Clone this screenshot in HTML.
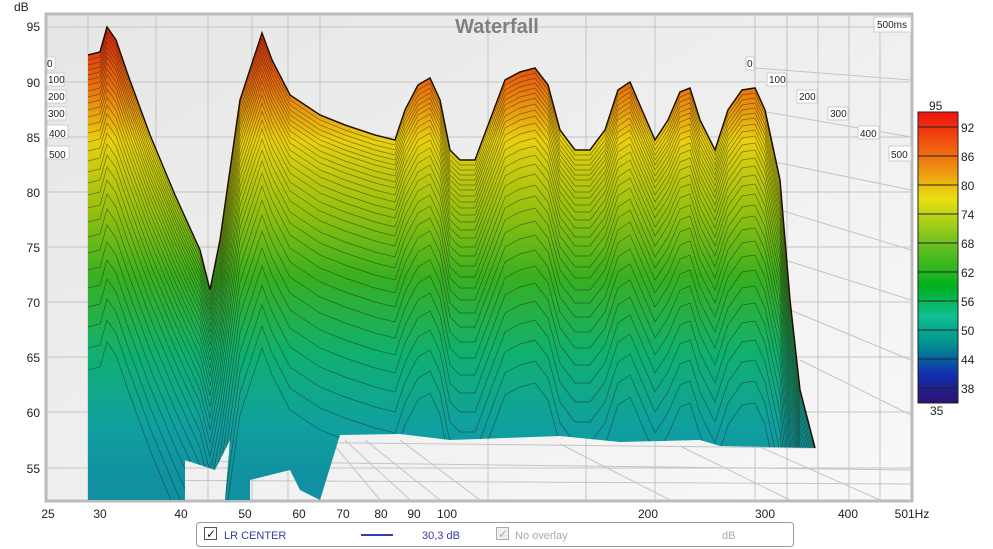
<!DOCTYPE html>
<html><head><meta charset="utf-8"><style>
html,body{margin:0;padding:0;background:#fff;width:993px;height:549px;overflow:hidden;font-family:"Liberation Sans",sans-serif}
svg{display:block}
</style></head><body>
<svg width="993" height="549" viewBox="0 0 993 549" xmlns="http://www.w3.org/2000/svg" font-family="Liberation Sans, sans-serif">
<defs>
<linearGradient id="bg" x1="0" y1="0" x2="1" y2="1"><stop offset="0" stop-color="#e6e6e6"/><stop offset="1" stop-color="#f8f8f8"/></linearGradient>
<linearGradient id="wf" x1="0" y1="28" x2="0" y2="480" gradientUnits="userSpaceOnUse">
<stop offset="0" stop-color="#d82010"/><stop offset="0.12" stop-color="#e86a10"/><stop offset="0.25" stop-color="#e8d010"/><stop offset="0.4" stop-color="#98c010"/><stop offset="0.55" stop-color="#38b020"/><stop offset="0.72" stop-color="#10b070"/><stop offset="0.88" stop-color="#10a0a0"/><stop offset="1" stop-color="#1090a0"/></linearGradient>
<linearGradient id="cb" x1="0" y1="0" x2="0" y2="1"><stop offset="0" stop-color="#f01010"/><stop offset="0.15" stop-color="#f07010"/><stop offset="0.3" stop-color="#e8e010"/><stop offset="0.45" stop-color="#70c020"/><stop offset="0.6" stop-color="#00b020"/><stop offset="0.7" stop-color="#10c090"/><stop offset="0.8" stop-color="#009090"/><stop offset="0.9" stop-color="#1030b0"/><stop offset="1" stop-color="#301070"/></linearGradient>
<path id="top" d="M88,55 L100,52 L107,27 L116,40 L128,75 L150,135 L175,195 L200,250 L210,290 L220,240 L240,100 L262,33 L272,60 L290,95 L320,115 L345,125 L375,135 L395,140 L405,110 L418,85 L430,78 L440,100 L450,150 L460,160 L475,160 L490,120 L505,80 L520,72 L535,68 L548,85 L560,130 L575,150 L590,150 L605,130 L618,90 L630,82 L642,110 L655,140 L668,120 L680,92 L690,88 L700,120 L715,150 L728,110 L742,90 L755,88 L765,110 L780,180 L790,300 L800,390 L815,448"/>
<clipPath id="cl"><path d="M88,500 L88,55 L100,52 L107,27 L116,40 L128,75 L150,135 L175,195 L200,250 L210,290 L220,240 L240,100 L262,33 L272,60 L290,95 L320,115 L345,125 L375,135 L395,140 L405,110 L418,85 L430,78 L440,100 L450,150 L460,160 L475,160 L490,120 L505,80 L520,72 L535,68 L548,85 L560,130 L575,150 L590,150 L605,130 L618,90 L630,82 L642,110 L655,140 L668,120 L680,92 L690,88 L700,120 L715,150 L728,110 L742,90 L755,88 L765,110 L780,180 L790,300 L800,390 L815,448 L720,446 L700,440 L620,442 L560,436 L450,440 L400,434 L340,435 L320,500 L300,490 L290,470 L250,480 L250,500 L225,500 L230,440 L215,470 L185,460 L185,500 Z"/></clipPath>
</defs>
<rect x="46" y="14" width="866" height="487" fill="url(#bg)" stroke="#bbb" stroke-width="3"/>
<g stroke="#c4c4c4" stroke-width="1">
<line x1="46" y1="27" x2="911" y2="27"/><line x1="46" y1="82" x2="911" y2="82"/><line x1="46" y1="137" x2="911" y2="137"/><line x1="46" y1="192" x2="911" y2="192"/><line x1="46" y1="247" x2="911" y2="247"/><line x1="46" y1="302" x2="911" y2="302"/><line x1="46" y1="357" x2="911" y2="357"/><line x1="46" y1="412" x2="911" y2="412"/><line x1="46" y1="468" x2="911" y2="468"/>
<line x1="88" y1="14" x2="88" y2="500"/><line x1="156" y1="14" x2="156" y2="500"/><line x1="208" y1="14" x2="208" y2="500"/><line x1="252" y1="14" x2="252" y2="500"/><line x1="288" y1="14" x2="288" y2="500"/><line x1="320" y1="14" x2="320" y2="500"/><line x1="488" y1="14" x2="488" y2="500"/><line x1="586" y1="14" x2="586" y2="500"/><line x1="655" y1="14" x2="655" y2="500"/><line x1="755" y1="14" x2="755" y2="500"/><line x1="787" y1="14" x2="787" y2="500"/><line x1="818" y1="14" x2="818" y2="500"/><line x1="849" y1="14" x2="849" y2="500"/><line x1="880" y1="14" x2="880" y2="500"/>
<line x1="88" y1="440" x2="815" y2="448"/><line x1="90" y1="460" x2="911" y2="470"/><line x1="90" y1="480" x2="911" y2="484"/>
<line x1="330" y1="440" x2="380" y2="500"/><line x1="345" y1="440" x2="410" y2="500"/><line x1="365" y1="440" x2="440" y2="500"/><line x1="400" y1="440" x2="480" y2="500"/><line x1="560" y1="444" x2="670" y2="500"/><line x1="680" y1="446" x2="790" y2="500"/><line x1="760" y1="447" x2="880" y2="500"/>
<line x1="755" y1="68" x2="911" y2="80"/><line x1="755" y1="110" x2="911" y2="137"/><line x1="765" y1="160" x2="911" y2="190"/><line x1="780" y1="210" x2="911" y2="250"/><line x1="785" y1="260" x2="911" y2="300"/><line x1="790" y1="310" x2="911" y2="360"/><line x1="800" y1="360" x2="911" y2="415"/>
</g>
<rect x="88" y="20" width="730" height="490" fill="url(#wf)" clip-path="url(#cl)"/>
<g clip-path="url(#cl)" fill="none" stroke="#1a1a0a" stroke-width="0.7" opacity="0.5">
<use href="#top"/><use href="#top" y="5"/><use href="#top" y="10"/><use href="#top" y="15"/><use href="#top" y="20"/><use href="#top" y="25"/><use href="#top" y="30"/><use href="#top" y="36"/><use href="#top" y="42"/><use href="#top" y="48"/><use href="#top" y="55"/><use href="#top" y="62"/><use href="#top" y="70"/><use href="#top" y="78"/><use href="#top" y="87"/><use href="#top" y="96"/><use href="#top" y="106"/><use href="#top" y="117"/><use href="#top" y="128"/><use href="#top" y="140"/><use href="#top" y="153"/><use href="#top" y="167"/><use href="#top" y="182"/><use href="#top" y="198"/><use href="#top" y="215"/><use href="#top" y="233"/><use href="#top" y="252"/><use href="#top" y="272"/><use href="#top" y="293"/><use href="#top" y="315"/>
</g>
<use href="#top" fill="none" stroke="#201000" stroke-width="1.5"/>
<text x="497" y="33" font-size="20" font-weight="bold" fill="#808080" text-anchor="middle">Waterfall</text>
<g font-size="12" fill="#222" text-anchor="end">
<text x="14" y="11" text-anchor="start">dB</text>
<text x="40" y="31">95</text><text x="40" y="87">90</text><text x="40" y="142">85</text><text x="40" y="197">80</text><text x="40" y="252">75</text><text x="40" y="307">70</text><text x="40" y="362">65</text><text x="40" y="417">60</text><text x="40" y="473">55</text>
</g>
<g font-size="12" fill="#222" text-anchor="middle">
<text x="48" y="518">25</text><text x="100" y="518">30</text><text x="181" y="518">40</text><text x="245" y="518">50</text><text x="299" y="518">60</text><text x="343" y="518">70</text><text x="381" y="518">80</text><text x="414" y="518">90</text><text x="447" y="518">100</text><text x="648" y="518">200</text><text x="765" y="518">300</text><text x="848" y="518">400</text><text x="912" y="518">501Hz</text>
</g>
<g font-size="10" fill="#222">
<rect x="47" y="57" width="8" height="13" fill="#fff" stroke="#ccc"/><text x="47" y="67">0</text>
<rect x="47" y="73" width="17" height="13" fill="#fff" stroke="#ccc"/><text x="48" y="83">100</text>
<rect x="47" y="90" width="19" height="13" fill="#fff" stroke="#ccc"/><text x="48" y="100">200</text>
<rect x="47" y="107" width="19" height="13" fill="#fff" stroke="#ccc"/><text x="48" y="117">300</text>
<rect x="47" y="125" width="21" height="13" fill="#fff" stroke="#ccc"/><text x="49" y="137">400</text>
<rect x="47" y="146" width="22" height="13" fill="#fff" stroke="#ccc"/><text x="49" y="158">500</text>
<rect x="746" y="57" width="8" height="13" fill="#fff" stroke="#ccc"/><text x="747" y="67">0</text>
<rect x="767" y="73" width="19" height="13" fill="#fff" stroke="#ccc"/><text x="769" y="83">100</text>
<rect x="797" y="90" width="20" height="13" fill="#fff" stroke="#ccc"/><text x="799" y="100">200</text>
<rect x="828" y="107" width="20" height="13" fill="#fff" stroke="#ccc"/><text x="830" y="117">300</text>
<rect x="858" y="126" width="21" height="13" fill="#fff" stroke="#ccc"/><text x="860" y="137">400</text>
<rect x="889" y="146" width="22" height="15" fill="#fff" stroke="#ccc"/><text x="891" y="158">500</text>
<rect x="874" y="17" width="37" height="15" fill="#fff" stroke="#ccc"/><text x="877" y="28">500ms</text>
</g>
<rect x="918" y="112" width="40" height="291" fill="url(#cb)" stroke="#222"/>
<g stroke="#222"><line x1="918" y1="127" x2="958" y2="127"/><line x1="918" y1="156" x2="958" y2="156"/><line x1="918" y1="185" x2="958" y2="185"/><line x1="918" y1="214" x2="958" y2="214"/><line x1="918" y1="243" x2="958" y2="243"/><line x1="918" y1="272" x2="958" y2="272"/><line x1="918" y1="301" x2="958" y2="301"/><line x1="918" y1="330" x2="958" y2="330"/><line x1="918" y1="359" x2="958" y2="359"/><line x1="918" y1="388" x2="958" y2="388"/></g>
<g font-size="12" fill="#222">
<text x="929" y="110">95</text><text x="930" y="415">35</text>
<text x="961" y="132">92</text><text x="961" y="161">86</text><text x="961" y="190">80</text><text x="961" y="219">74</text><text x="961" y="248">68</text><text x="961" y="277">62</text><text x="961" y="306">56</text><text x="961" y="335">50</text><text x="961" y="364">44</text><text x="961" y="393">38</text>
</g>
<rect x="196.5" y="522.5" width="597" height="24" rx="3" fill="#fff" stroke="#999"/>
<rect x="204.5" y="527.5" width="12" height="12" fill="#fff" stroke="#555"/><text x="206" y="538" font-size="12" fill="#222">✓</text>
<text x="224" y="539" font-size="11" fill="#3838a8">LR CENTER</text>
<line x1="361" y1="535" x2="393" y2="535" stroke="#3838b8" stroke-width="2"/>
<text x="422" y="539" font-size="11" fill="#3838a8">30,3 dB</text>
<rect x="496.5" y="527.5" width="12" height="12" fill="#eee" stroke="#aaa"/><text x="498" y="538" font-size="12" fill="#aaa">✓</text>
<text x="515" y="539" font-size="11" fill="#aaa">No overlay</text>
<text x="722" y="539" font-size="11" fill="#aaa">dB</text>
</svg>
</body></html>
